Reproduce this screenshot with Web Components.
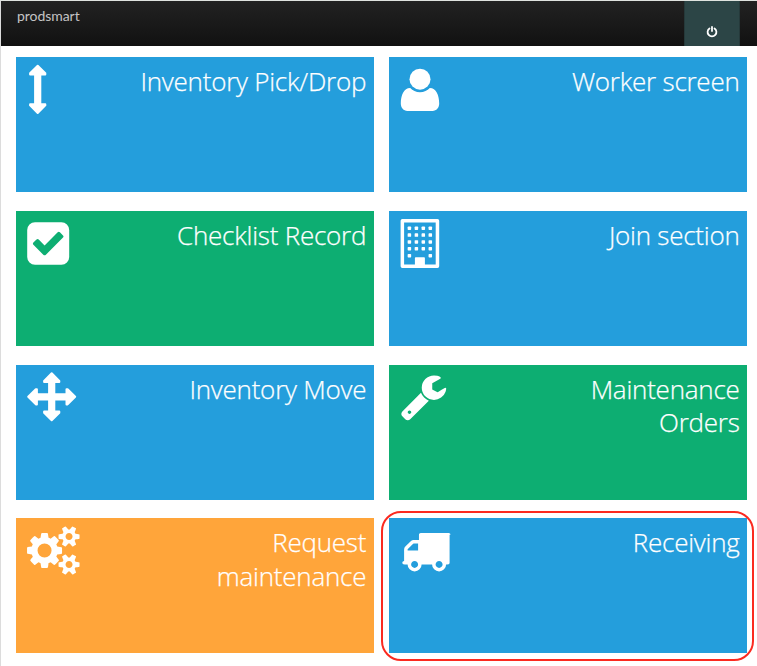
<!DOCTYPE html>
<html lang="en">
<head>
<meta charset="utf-8">
<title>prodsmart</title>
<style>
html,body{margin:0;height:100%;background:#fff;overflow:hidden}
body{font-family:"Open Sans","Noto Sans",sans-serif}
</style>
</head>
<body>
<app-shell>
  <top-bar slot="header">prodsmart</top-bar>
  <menu-tile icon="vertical">Inventory Pick/Drop</menu-tile>
  <menu-tile icon="user">Worker screen</menu-tile>
  <menu-tile icon="check" color="green">Checklist Record</menu-tile>
  <menu-tile icon="building">Join section</menu-tile>
  <menu-tile icon="move">Inventory Move</menu-tile>
  <menu-tile icon="wrench" color="green">Maintenance<br>Orders</menu-tile>
  <menu-tile icon="cogs" color="orange">Request<br>maintenance</menu-tile>
  <menu-tile icon="truck" highlighted>Receiving</menu-tile>
</app-shell>
<script>
const S = 0.02734;
const windows = [17.2, 24.1, 30.9, 37.8, 44.7].map((y, r) =>
  [20.1, 27.1, 34, 41].filter((x, c) => r < 4 || c === 0 || c === 3)
    .map(x => `<rect x="${x - 1.75}" y="${y - 1.75}" width="3.5" height="3.5" rx=".7"/>`).join('')).join('');
const smallCog = 'v140q0 16-149 31-12 27-30 52 51 113 51 138 0 4-4 7-122 71-124 71-8 0-46-47t-52-68q-20 2-30 2t-30-2q-14 21-52 68t-46 47q-2 0-124-71-4-3-4-7 0-25 51-138-18-25-30-52-149-15-149-31v-140q0-16 149-31 13-29 30-52-51-113-51-138 0-4 4-7 4-2 35-20t59-34 30-16q8 0 46 46.5t52 67.5q20-2 30-2t30 2q51-71 92-112l6-2q4 0 124 70 4 3 4 7 0 25-51 138 17 23 30 52 149 15 149 31z';
const ICONS = {
  vertical: '<path stroke="#fff" stroke-width="2" stroke-linejoin="round" d="M21.7 8.7 29.3 16.3V17.4H24.3V47.3H29.3V48.4L21.7 56 14.1 48.4V47.3H19.1V17.4H14.1V16.3Z"/>',
  user: '<g transform="translate(.4 0)"><circle cx="30.6" cy="22.2" r="10.5"/><path d="M20.8 31C23.2 33.5 26.6 35.2 30.6 35.2S38 33.5 40.4 31C46.8 31 49.8 38.5 49.8 46.6C49.8 51 47 54 43.2 54H18C14.2 54 11.4 51 11.4 46.6C11.4 38.5 14.4 31 20.8 31Z"/></g>',
  check: '<path fill-rule="evenodd" d="M19 11.2H45.4A7.8 7.8 0 0 1 53.2 19V46A7.8 7.8 0 0 1 45.4 53.8H19A7.8 7.8 0 0 1 11.2 46V19A7.8 7.8 0 0 1 19 11.2ZM29.900 43.700 47 26.600Q48 25.500 47 24.400L43.900 21.300Q42.800 20.300 41.700 21.300L28.600 34.400 22.700 28.500Q21.600 27.500 20.500 28.500L17.400 31.600Q16.400 32.700 17.400 33.800L27.300 43.700Q28.600 44.900 29.900 43.700Z"/>',
  building: '<g transform="translate(.3 0)"><path fill-rule="evenodd" d="M13 8H48.2Q49.9 8 49.9 9.7V55.3Q49.9 57 48.2 57H13Q11.3 57 11.3 55.3V9.7Q11.3 8 13 8ZM14.8 11.6V53.5H25.6V47Q25.6 46.2 26.4 46.2H34.8Q35.6 46.2 35.6 47V53.5H46.4V11.6Z"/>' + windows + '</g>',
  move: '<path stroke="#fff" stroke-width="2" stroke-linejoin="round" d="M35.7 8.3 43.3 15.9V17H38.3V29.2H50.5V24.2H51.6L59.2 31.8 51.6 39.4H50.5V34.4H38.3V46.6H43.3V47.7L35.7 55.3 28.1 47.7V46.6H33.1V34.4H20.9V39.4H19.8L12.2 31.8 19.8 24.2H20.9V29.2H33.1V17H28.1V15.9Z"/>',
  wrench: `<path transform="translate(10 6.9) scale(${S})" d="M448 1472q0-26-19-45t-45-19-45 19-19 45 19 45 45 19 45-19 19-45zm644-420l-682 682q-37 37-90 37-52 0-91-37l-106-108q-38-36-38-90 0-53 38-91l681-681q39 98 114.500 173.500t173.500 114.500zm634-435q0 39-23 106-47 134-164.500 217.500t-258.500 83.500q-185 0-316.500-131.500t-131.500-316.500 131.500-316.500 316.500-131.500q58 0 121.500 16.500t107.500 46.500q16 11 16 28t-16 28l-293 169v224l193 107q5-3 79-48.500t135.500-81 70.500-35.500q15 0 23.500 10t8.500 25z"/>`,
  cogs: `<path transform="translate(12.8 8) scale(${S})" d="M832 896q0-106-75-181t-181-75-181 75-75 181 75 181 181 75 181-75 75-181zm768 512q0-52-38-90t-90-38-90 38-38 90q0 53 37.500 90.500t90.500 37.500 90.500-37.500 37.500-90.500zm0-1024q0-52-38-90t-90-38-90 38-38 90q0 53 37.500 90.500t90.500 37.500 90.500-37.500 37.500-90.500zm-384 421v185q0 10-7 19.500t-16 10.500l-155 24q-11 35-32 76 34 48 90 115 7 11 7 20 0 12-7 19-23 30-82.500 89.500t-78.500 59.500q-11 0-21-7l-115-90q-37 19-77 31-11 108-23 155-7 24-30 24h-186q-11 0-20-7.500t-10-17.500l-23-153q-34-10-75-31l-118 89q-7 7-20 7-11 0-21-8-144-133-144-160 0-9 7-19 10-14 41-53t47-61q-23-44-35-82l-152-24q-10-1-17-9.500t-7-19.500v-185q0-10 7-19.500t16-10.500l155-24q11-35 32-76-34-48-90-115-7-11-7-20 0-12 7-20 22-30 82-89t79-59q11 0 21 7l115 90q34-18 77-32 11-108 23-154 7-24 30-24h186q11 0 20 7.500t10 17.500l23 153q34 10 75 31l118-89q8-7 20-7 11 0 21 8 144 133 144 160 0 8-7 19-12 16-42 54t-45 60q23 48 34 82l152 23q10 2 17 10.500t7 19.500zM1856 1338${smallCog}M1856 314${smallCog}"/>`,
  truck: `<path transform="translate(11.6 7.9) scale(${S})" d="M640 1408q0-52-38-90t-90-38-90 38-38 90 38 90 90 38 90-38 38-90zm-384-512h384v-256h-158q-13 0-22 9l-195 195q-9 9-9 22v30zm1280 512q0-52-38-90t-90-38-90 38-38 90 38 90 90 38 90-38 38-90zm256-1088v1024q0 15-4 26.500t-13.500 18.500-16.500 11.500-23.500 6-22.500 2-25.500 0-22.500-.5q0 106-75 181t-181 75-181-75-75-181h-384q0 106-75 181t-181 75-181-75-75-181h-64q-3 0-22.500.5t-25.500 0-22.500-2-23.500-6-16.500-11.500-13.500-18.500-4-26.500q0-26 19-45t45-19v-320q0-8-.5-35t0-38 2.500-34.500 6.500-37 14-30.500 22.500-30l198-198q19-19 50.500-32t58.500-13h192v-192q0-26 19-45t45-19h1024q26 0 45 19t19 45z"/>`
};

customElements.define('tile-icon', class extends HTMLElement {
  connectedCallback() {
    const root = this.attachShadow({mode: 'open'});
    root.innerHTML = `<style>:host{display:block;width:68px;height:68px;flex:none}svg{display:block}</style>
      <svg width="68" height="68" viewBox="0 0 68 68" fill="#fff" aria-hidden="true">${ICONS[this.getAttribute('name')] || ''}</svg>`;
  }
});

customElements.define('menu-tile', class extends HTMLElement {
  connectedCallback() {
    const root = this.attachShadow({mode: 'open'});
    root.innerHTML = `<style>
      :host{display:flex;position:relative;justify-content:space-between;background:#249edc;color:#fff;min-width:0}
      :host([color=green]){background:#0dae72}
      :host([color=orange]){background:#ffa53a}
      .label{padding:8px 7.5px 0 0;text-align:right;white-space:nowrap;font-size:26px;line-height:33.5px;font-weight:300;letter-spacing:-.24px;-webkit-text-stroke:.25px #fff}
      :host([highlighted])::after{content:"";position:absolute;inset:-7.5px -7px -7.500px -8.300px;border:2px solid #fb2a20;border-radius:20px}
      </style><tile-icon name="${this.getAttribute('icon')}"></tile-icon><div class="label"><slot></slot></div>`;
  }
});

customElements.define('top-bar', class extends HTMLElement {
  connectedCallback() {
    const root = this.attachShadow({mode: 'open'});
    root.innerHTML = `<style>
      :host{display:flex;justify-content:space-between;height:45px;background:linear-gradient(#222,#111);box-sizing:border-box;padding:0 17px 0 16px}
      .logo{font:400 14px/18px Lato,sans-serif;color:#c4c4c4;padding-top:6px;letter-spacing:-.05px}
      .power{width:56px;box-sizing:border-box;background:#2c4546;border:solid #25393a;border-width:0 1px;display:flex;justify-content:center;align-items:flex-end;padding-bottom:8.500px}
      svg{display:block}
      </style><div class="logo"><slot></slot></div>
      <div class="power"><svg width="12" height="12" viewBox="0 0 12 12" fill="none" stroke="#fff" stroke-width="1.8" stroke-linecap="round"><path d="M3.500 2.400A4.400 4.400 0 1 0 8.500 2.400M6 .9V5.100"/></svg></div>`;
  }
});

customElements.define('app-shell', class extends HTMLElement {
  connectedCallback() {
    const root = this.attachShadow({mode: 'open'});
    root.innerHTML = `<style>
      :host{display:block;box-sizing:border-box;height:666px;border-left:1px solid #dcdcdc;border-top:1px solid #dfe3df}
      .grid{display:grid;grid-template-columns:357.700px 357.700px;grid-auto-rows:135px;column-gap:15.700px;row-gap:18.700px;padding:11.200px 0 0 15px}
      </style><slot name="header"></slot><div class="grid"><slot></slot></div>`;
  }
});
</script>
</body>
</html>
